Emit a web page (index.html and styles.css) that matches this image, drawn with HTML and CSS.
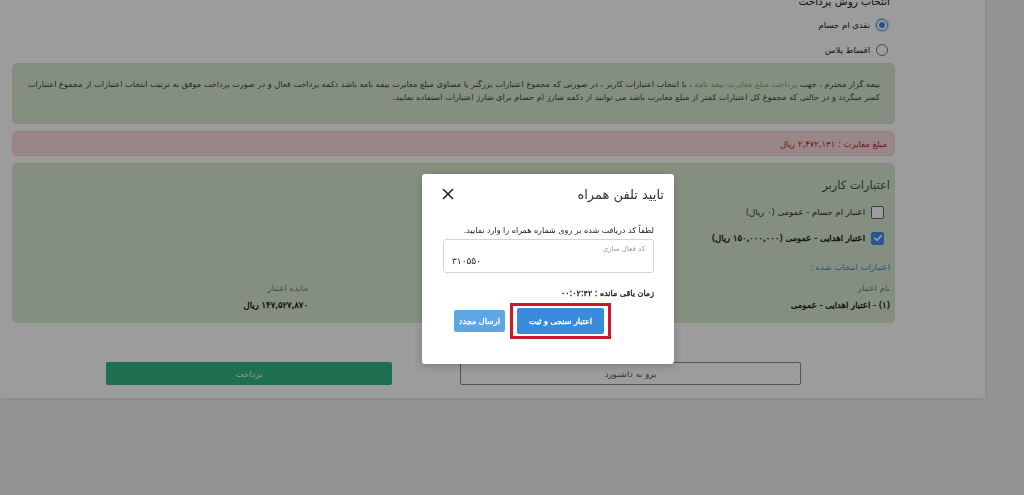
FILE: index.html
```html
<!DOCTYPE html>
<html lang="fa" dir="rtl">
<head>
  <meta charset="utf-8">
  <title>پرداخت مغایرت</title>
  <link rel="stylesheet" href="styles.css">
</head>
<body>
  <div class="page">
    <div class="content">
      <h3 class="section-title">انتخاب روش پرداخت</h3>
      <label class="radio"><span class="radio-dot checked"></span>نقدی ام حسام</label>
      <label class="radio"><span class="radio-dot"></span>اقساط پلاس</label>

      <div class="alert alert-success">
        <span class="line">بیمه گزار محترم ، جهت <span class="link">پرداخت مبلغ مغایرت بیمه نامه</span> ، با انتخاب اعتبارات کاربر ، در صورتی که مجموع اعتبارات بزرگتر یا مساوی مبلغ مغایرت بیمه نامه باشد دکمه پرداخت فعال و در صورت پرداخت موفق به ترتیب انتخاب اعتبارات از مجموع اعتبارات</span>
        <span class="line">کسر میگردد و در حالتی که مجموع کل اعتبارات کمتر از مبلغ مغایرت باشد می توانید از دکمه شارژ ام حسام برای شارژ اعتبارات استفاده نمایید.</span>
      </div>

      <div class="alert alert-danger">مبلغ مغایرت : ۲,۴۷۲,۱۳۱ ریال</div>

      <div class="credits">
        <h4 class="credits-title">اعتبارات کاربر</h4>
        <label class="check"><span class="box"></span>اعتبار ام حسام - عمومی (۰ ریال)</label>
        <label class="check strong">
          <span class="box checked">
            <svg width="10" height="10" viewBox="0 0 10 10"><path d="M1.8 5.2 L4 7.3 L8.3 2.6" fill="none" stroke="#fff" stroke-width="1.6" stroke-linecap="round" stroke-linejoin="round"/></svg>
          </span>
          اعتبار اهدایی - عمومی (۱۵۰,۰۰۰,۰۰۰ ریال)
        </label>
        <div class="selected-title">اعتبارات انتخاب شده :</div>
        <div class="credit-table">
          <div class="th">نام اعتبار</div>
          <div></div>
          <div class="th">مانده اعتبار</div>
          <div class="td strong">(۱) - اعتبار اهدایی - عمومی</div>
          <div></div>
          <div class="td strong">۱۴۷,۵۲۷,۸۷۰ ریال</div>
        </div>
      </div>

      <div class="actions">
        <button class="btn btn-outline">برو به داشبورد</button>
        <button class="btn btn-green">پرداخت</button>
      </div>
    </div>
  </div>

  <div class="backdrop"></div>

  <div class="modal">
    <div class="modal-header">
      <h5 class="modal-title">تایید تلفن همراه</h5>
      <button class="close">
        <svg width="12" height="12" viewBox="0 0 12 12"><path d="M1.5 1.5 L10.5 10.5 M10.5 1.5 L1.5 10.5" stroke="#222" stroke-width="1.6" stroke-linecap="round"/></svg>
      </button>
    </div>
    <div class="modal-body">
      <p class="hint">لطفاً کد دریافت شده بر روی شماره همراه را وارد نمایید.</p>
      <div class="field">
        <span class="field-label">کد فعال سازی</span>
        <input class="field-input" type="text" value="۳۱۰۵۵۰" dir="ltr">
      </div>
      <p class="timer strong">زمان باقی مانده : ۰۰:۰۲:۴۲</p>
      <div class="modal-actions">
        <span class="highlight"><button class="btn btn-blue strong">اعتبار سنجی و ثبت</button></span>
        <button class="btn btn-light-blue strong">ارسال مجدد</button>
      </div>
    </div>
  </div>
</body>
</html>
```

FILE: styles.css
```css
html, body {
  margin: 0;
  padding: 0;
}

body {
  background: #f0f0f0;
  font-family: "DejaVu Sans", "Noto Sans", sans-serif;
  font-size: 8.5px;
  color: #333;
  height: 495px;
  overflow: hidden;
}

/* bold look without the extra width of DejaVu Bold */
.strong {
  -webkit-text-stroke: 0.35px currentColor;
}

.page {
  width: 985px;
  margin-right: auto;
  background: #fff;
  box-shadow: 0 1px 4px rgba(0, 0, 0, 0.08);
}

.content {
  padding: 0 90px 13px 12px;
}

.section-title {
  margin: -7px 0 0;
  padding-right: 5px;
  font-size: 10.5px;
  line-height: 16px;
  font-weight: normal;
  color: #222;
}

.radio {
  display: flex;
  align-items: center;
  height: 25px;
  padding-right: 7px;
  gap: 6px;
  color: #222;
}

.section-title + .radio {
  margin-top: 3px;
}

.radio-dot {
  width: 10px;
  height: 10px;
  border: 1.5px solid #777;
  border-radius: 50%;
  display: flex;
  align-items: center;
  justify-content: center;
}

.radio-dot.checked {
  border-color: #4d8fe6;
  box-shadow: 0 0 0 1.5px #cfe0fb;
}

.radio-dot.checked::after {
  content: "";
  width: 6px;
  height: 6px;
  border-radius: 50%;
  background: #3f86e3;
}

.alert {
  border-radius: 5px;
  border: 1px solid transparent;
}

.alert-success {
  margin-top: 1px;
  padding: 14px 14px 19px;
  background: #daead3;
  border-color: #d1e3ca;
  color: #344f34;
  line-height: 13px;
  font-size: 8.2px;
}

.line {
  display: block;
  white-space: nowrap;
}

.link {
  color: #6fb84e;
}

.alert-danger {
  margin-top: 7px;
  height: 23px;
  padding: 0 7px;
  display: flex;
  align-items: center;
  background: #fadcdc;
  border-color: #f5d2d2;
  color: #b3283c;
}

.credits {
  margin-top: 7px;
  padding: 12px 5px 10px;
  height: 138px;
  background: #daead3;
  border-radius: 5px;
}

.credits-title {
  margin: 0;
  font-size: 11.5px;
  line-height: 20px;
  font-weight: normal;
  color: #2c5a45;
}

.check {
  display: flex;
  align-items: center;
  height: 26px;
  padding-right: 6px;
  gap: 6px;
  color: #333;
}

.credits-title + .check {
  margin-top: 4px;
}

.check.strong {
  color: #222;
}

.box {
  width: 11px;
  height: 11px;
  border: 1px solid #666;
  border-radius: 2px;
  background: #fff;
  display: flex;
  align-items: center;
  justify-content: center;
  -webkit-text-stroke: 0;
}

.box.checked {
  background: #3f8ee8;
  border-color: #3f8ee8;
}

.selected-title {
  margin-top: 8px;
  line-height: 16px;
  color: #4b86c4;
}

.credit-table {
  margin-top: 5px;
  display: grid;
  grid-template-columns: 1fr 1fr 1fr;
  line-height: 17px;
}

.th {
  color: #6f8a72;
}

.td {
  color: #222;
}

.actions {
  margin-top: 39px;
  display: flex;
  justify-content: center;
  gap: 68px;
}

.btn {
  font-family: inherit;
  font-size: 8.5px;
  border: none;
  border-radius: 2px;
  padding: 0;
  white-space: nowrap;
  cursor: pointer;
}

.btn-outline {
  width: 341px;
  height: 23px;
  background: #fff;
  border: 1px solid #8a8a8a;
  color: #555;
}

.btn-green {
  width: 286px;
  height: 23px;
  background: #33b585;
  color: #e8f5ee;
}

.backdrop {
  position: fixed;
  inset: 0;
  background: rgba(0, 0, 0, 0.39);
}

.modal {
  position: absolute;
  left: 422px;
  top: 174px;
  width: 252px;
  background: #fff;
  border-radius: 3px;
  box-shadow: 0 2px 8px rgba(0, 0, 0, 0.2);
}

.modal-header {
  height: 40px;
  padding: 0 10px 0 20px;
  display: flex;
  align-items: center;
  justify-content: space-between;
}

.modal-title {
  margin: 0;
  font-size: 13px;
  font-weight: normal;
  color: #333;
}

.close {
  border: none;
  background: none;
  padding: 0;
  display: flex;
}

.modal-body {
  padding: 10px 20px 25px 21px;
}

.hint {
  margin: 0;
  line-height: 14px;
  font-size: 8px;
  color: #222;
}

.field {
  margin-top: 1px;
  height: 32px;
  border: 1px solid #d4d4d4;
  border-radius: 3px;
  display: flex;
  flex-direction: column;
  padding: 0 8px;
}

.field-label {
  margin-top: 4px;
  font-size: 7px;
  line-height: 10px;
  color: #999;
}

.field-input {
  border: none;
  outline: none;
  padding: 0;
  margin-top: 2px;
  font-family: inherit;
  font-size: 9px;
  color: #222;
  text-align: left;
  background: transparent;
}

.timer {
  margin: 14px 0 0;
  line-height: 14px;
  font-size: 8px;
  color: #222;
}

.modal-actions {
  margin-top: 2px;
  padding-right: 43px;
  display: flex;
  align-items: center;
  gap: 5px;
}

.highlight {
  display: flex;
  border: 3px solid #d0182a;
  padding: 2px 4px;
}

.btn-blue {
  width: 87px;
  height: 26px;
  background: #3a8bdc;
  color: #fff;
  font-size: 8px;
}

.btn-light-blue {
  width: 51px;
  height: 22px;
  background: #5ea6e6;
  color: #fff;
  font-size: 8px;
}
```
